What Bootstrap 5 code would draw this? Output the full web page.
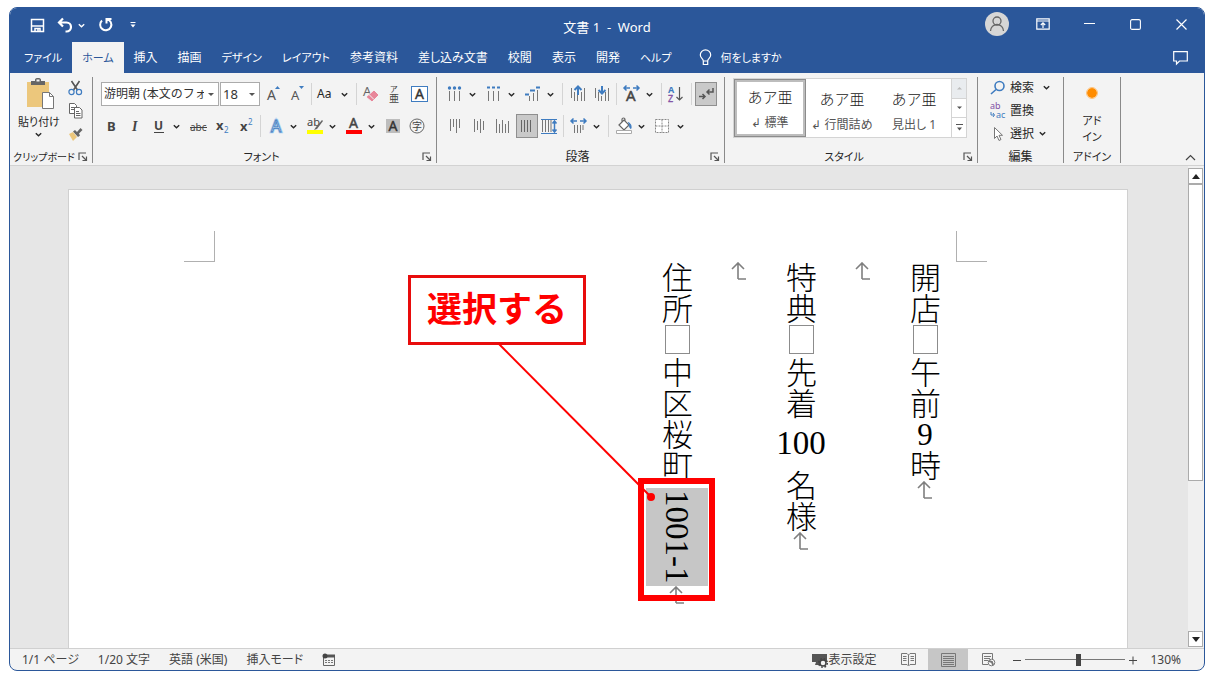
<!DOCTYPE html>
<html lang="ja">
<head>
<meta charset="utf-8">
<meta name="viewport" content="width=device-width, initial-scale=1">
<title>文書 1 - Word</title>
<link rel="stylesheet" href="https://cdn.jsdelivr.net/npm/bootstrap@5.3.0/dist/css/bootstrap.min.css">
<style>
:root{--blue:#2b579a;--ui:"Noto Sans","Noto Sans CJK JP",sans-serif;--mincho:"Liberation Serif","Noto Sans CJK JP",serif}
body{height:100vh;background:#fff;font:12px/16px var(--ui);font-feature-settings:"palt";color:#333;padding:7px 9px 6px;overflow:hidden}
button{background:none;border:0;padding:0;color:inherit;font:inherit;line-height:inherit}
svg{display:block;flex:none;overflow:visible}
a{color:inherit;text-decoration:none}
.kana{font-size:11px}
.kana-sm{font-size:10px}
.app-window{border:1px solid var(--blue);border-radius:8px;overflow:hidden;background:#f3f3f3}
.title-bar{display:grid;grid-template-columns:1fr auto 1fr;height:34px;background:var(--blue);color:#fff}
.title-bar h1{font-size:13px;line-height:16px;white-space:pre;margin:0}
.caption-tool{width:46px;height:32px;display:grid;place-items:center}
.tab-row{height:31px;background:var(--blue);color:#fff}
.tab-row a{display:block;text-align:center;line-height:31px;padding:0 10px;white-space:nowrap}
.tab-row a.active{background:#f3f3f3;color:var(--blue)}
.ribbon{height:93px;border-bottom:1px solid #d2d2d2;color:#262626;font-size:12px}
.group-box{margin:4px 0 2px;border-right:1px solid #8a8a8a;display:flex;flex-direction:column;flex:none}
.group-name{display:flex;align-items:center;margin-top:auto;height:12px;line-height:12px;white-space:nowrap}
.group-name span{flex:1;text-align:center}
.g-clip{width:83px}.g-font{width:344px}.g-para{width:288px}.g-style{width:253px}.g-edit{width:86px}.g-add{width:57px}
.tool-row{display:flex;align-items:center;height:30px;margin-top:2px}
.tool{width:24px;height:22px;display:flex;align-items:center;flex:none}
.split{display:flex;width:39px;flex:none;align-items:center}
.split .tool{width:22px}
.drop{width:10px;height:22px;display:grid;place-items:center}
.rule{width:1px;height:22px;background:#d4d4d4;margin-right:5px;flex:none}
.tool.pressed{width:22px;height:24px;background:#c9c9c9;border:1px solid #8f8f8f;margin:0 1px 0 -1px}
.pick{appearance:none;border:1px solid #ababab;border-radius:0;background:#fff;height:24px;font:12px/20px var(--ui);padding:0 14px 0 2px;color:#333;width:100%}
.pick-wrap{position:relative}
.pick-wrap::after{content:"";position:absolute;right:5px;top:11px;border:3px solid transparent;border-top-color:#555;border-bottom:0}
.pick-font{width:118px;margin-right:1px}.pick-size{width:40px;margin-right:3px}
.pick-size .pick{font-size:13px}
.gallery{display:flex;width:234px;height:60px;border:1px solid #d4d4d4;background:#fff;margin:1px 0 0 8px}
.style-tile{width:72px;text-align:center;white-space:nowrap;color:#555;height:58px;padding-top:5px}
.style-tile b{display:block;font:300 15px/22px var(--mincho);color:#222;margin-bottom:6px;font-feature-settings:normal}
.style-tile.chosen{border:3px solid #bdbdbd;outline:1px solid #8c8c8c;outline-offset:-1px;padding-top:2px}
.gal-step{width:15px;flex:1;display:grid;place-items:center;border-left:1px solid #d4d4d4;border-bottom:1px solid #d4d4d4}
.edit-line{height:23px;display:flex;align-items:center;white-space:nowrap}
.edit-list{margin-top:-1px}
.addin-dot{margin-bottom:13px}
.work{background:#e6e6e6;min-height:0}
.paper{margin:23px 60px 0 58px;background:#fff;border:1px solid #d0d0d0;border-bottom:0;position:relative;min-width:0}
.marks{padding:41px 140px 0 115px}
.corner{width:31px;height:31px;border:1px solid #b0b0b0;border-top:0}
.corner.start{border-left:0}.corner.end{border-right:0}
.tategaki{writing-mode:vertical-rl;margin-right:171px;margin-left:auto;font:300 31px/62px "Noto Sans CJK JP",sans-serif;font-feature-settings:normal;color:#000;white-space:nowrap;height:360px}
.tategaki p{margin:0}
.space-box{display:inline-block;width:25px;height:29px;border:1px solid #8c8c8c;margin:1px 0 3px}
.tcy{display:inline-block;writing-mode:horizontal-tb;line-height:31px;height:31px;font-family:var(--mincho)}
.tcy.wide{font-size:33px;margin:9px 0 11px}
.pmark{display:inline-block;width:16px;height:18px}
.picked{display:inline-block;background:#c6c6c6;font-family:var(--mincho);font-size:33px;line-height:62px;padding:2px 0;margin-top:7px;height:98px;position:relative}
.frame-red{position:absolute;left:-8px;top:-10px;width:77px;height:123px;border:6px solid #f00}
.callout{position:absolute;right:541px;top:85px;width:178px;height:70px;border:3px solid #e80c0c;background:#fff;color:#f00;font:700 35px/58px "Noto Sans CJK JP",sans-serif;text-align:center;font-feature-settings:normal}
.leader{position:absolute;right:470px;top:154px}
.vscroll{width:16px;padding:2px 1px 1px 0;background:#f0f0f0}
.vscroll button{height:16px;background:#fff;border:1px solid #ababab;display:grid;place-items:center;flex:none}
.thumb{flex:0 0 62%;border:1px solid #ababab;background:#fff}
.status{height:22px;border-top:1px solid #d0d0d0;color:#444;font-size:12px;line-height:21px;white-space:nowrap}
.status-info{gap:19px}
.status-view{padding-right:23px}
.view-btn{width:40px;height:21px;display:grid;place-items:center}
.view-btn.on{background:#c6c6c6}
.zoom-range{appearance:none;width:100px;height:12px;background:linear-gradient(#777,#777) center/100% 1px no-repeat;margin:0 3px}
.zoom-range::-webkit-slider-thumb{appearance:none;width:5px;height:12px;background:#444}
</style>
<script src="https://cdn.jsdelivr.net/npm/bootstrap@5.3.0/dist/js/bootstrap.bundle.min.js"></script>
</head>
<body class="d-flex">
<svg width="0" height="0" class="position-absolute" aria-hidden="true">
  <symbol id="chev" viewBox="0 0 10 10"><path d="M2 3.500l3 3 3-3" fill="none" stroke="currentColor" stroke-width="1.500"/></symbol>
  <symbol id="launch" viewBox="0 0 10 10"><path d="M1 8V1h7M4 4l4 4M8.500 4.500v4h-4" fill="none" stroke="#555" stroke-width="1.200"/></symbol>
  <symbol id="ret" viewBox="0 0 16 18"><path d="M7 17V1.500M1 7l6-6 6 6M7 17h8" fill="none" stroke="#7f7f7f" stroke-width="1.600"/></symbol>
  <symbol id="bars" viewBox="0 0 20 20"><path d="M4.500 7v10M9.500 7v10M14.500 7v10" stroke="#777" fill="none"/></symbol>
</svg>

<div class="app-window d-flex flex-column flex-fill">
  <header>
    <div class="title-bar">
      <div class="d-flex align-items-center">
        <button class="ms-3 me-1 ps-1" aria-label="上書き保存"><svg width="15" height="15" viewBox="0 0 15 15" fill="none" stroke="#fff" stroke-width="1.500"><path d="M1.500 1.500h12v12h-12zM1.500 8h12M5 13.500V10.500h5v3M8 11v2"/></svg></button>
        <button class="ms-2" aria-label="元に戻す"><svg width="16" height="16" viewBox="0 0 16 16" fill="none" stroke="#fff" stroke-width="2.200"><path d="M6 1.500L2 5.500l4 4M2 5.500h7.500a4.500 4.500 0 0 1 0 9H8.500"/></svg></button>
        <button class="ms-1" aria-label="元に戻す一覧"><svg width="9" height="9"><use href="#chev"/></svg></button>
        <button class="ms-2 ps-1" aria-label="やり直し"><svg width="15" height="16" viewBox="0 0 15 16" fill="none" stroke="#fff" stroke-width="2"><path d="M8.500 6.500V2h5M9 2.200A5.600 5.600 0 1 1 4 3.500"/></svg></button>
        <button class="ms-3" aria-label="クイックアクセスの設定"><svg width="8" height="8" viewBox="0 0 8 8"><path d="M1.500 1.500h5" stroke="#fff"/><path d="M1.500 3.500h5L4 6.500z" fill="#fff"/></svg></button>
      </div>
      <h1 class="align-self-center fw-normal pt-1">文書 1  -  Word</h1>
      <div class="d-flex justify-content-end">
        <button class="caption-tool" aria-label="アカウント"><svg width="24" height="24" viewBox="0 0 24 24"><circle cx="12" cy="12" r="12" fill="#d6d6d6"/><circle cx="12" cy="9" r="4" fill="none" stroke="#666" stroke-width="1.300"/><path d="M5.500 19a6.500 6.500 0 0 1 13 0" fill="none" stroke="#666" stroke-width="1.300"/></svg></button>
        <button class="caption-tool" aria-label="リボンの表示オプション"><svg width="14" height="12" viewBox="0 0 14 12" fill="none" stroke="#fff" stroke-width="1.200"><path d="M.8.800h12.400v10.400H.800zM1 3h12M7 10V5M4.800 7L7 4.800 9.200 7"/></svg></button>
        <button class="caption-tool" aria-label="最小化"><svg width="11" height="10"><path d="M0 4.500h11" stroke="#fff"/></svg></button>
        <button class="caption-tool" aria-label="最大化"><svg width="11" height="11"><rect x=".6" y=".6" width="9.800" height="9.800" rx="1.500" fill="none" stroke="#fff" stroke-width="1.100"/></svg></button>
        <button class="caption-tool" aria-label="閉じる"><svg width="11" height="11"><path d="M.5.500l10 10M10.500.500l-10 10" stroke="#fff" stroke-width="1.200"/></svg></button>
      </div>
    </div>
    <nav class="tab-row d-flex ps-1">
      <a href="#" class="kana">ファイル</a><a href="#" class="active kana">ホーム</a><a href="#">挿入</a><a href="#">描画</a><a href="#" class="kana">デザイン</a><a href="#" class="kana">レイアウト</a><a href="#">参考資料</a><a href="#">差し込み文書</a><a href="#">校閲</a><a href="#">表示</a><a href="#">開発</a><a href="#" class="kana">ヘルプ</a>
      <a href="#" class="d-flex align-items-center gap-2 ms-2"><svg width="13" height="17" viewBox="0 0 13 17" fill="none" stroke="#fff" stroke-width="1.200"><path d="M4.300 12c0-2.500-3-3-3-6a5.200 5.200 0 0 1 10.400 0c0 3-3 3.500-3 6zM4.300 12v3.500h4.400V12"/></svg><span class="kana">何をしますか</span></a>
      <button class="ms-auto me-3" aria-label="コメント"><svg width="15" height="14" viewBox="0 0 15 14" fill="none" stroke="#fff" stroke-width="1.200"><path d="M.7.700h13.600v9.300H6.500l-3 3v-3H.7z"/></svg></button>
    </nav>
  </header>

  <section class="ribbon d-flex" aria-label="リボン">
    <div class="group-box g-clip">
      <div class="d-flex">
        <button class="d-flex flex-column align-items-center ms-2 me-1" aria-label="貼り付け">
          <svg width="30" height="33" viewBox="0 0 30 33"><path d="M3 5h22v25H3z" fill="#ecc77c"/><path d="M7 4h4V2.500A2 2 0 0 1 13 1h2a2 2 0 0 1 2 1.500V4h4v4H7z" fill="#666"/><rect x="12.500" y="2.500" width="3" height="2" fill="#f3f3f3"/><path d="M18.500 15.500h7l4 4v12h-11z" fill="#fff" stroke="#777"/><path d="M25.500 15.500v4h4" fill="none" stroke="#777"/></svg>
          <span class="mt-1 text-nowrap kana">貼り付け</span>
          <svg width="9" height="9"><use href="#chev"/></svg>
        </button>
        <div class="d-flex flex-column edit-list ps-1">
          <button class="edit-line" aria-label="切り取り"><svg width="15" height="16" viewBox="0 0 15 16" fill="none"><path d="M3.500 1l6 9M11.500 1l-6 9" stroke="#555" stroke-width="1.600"/><circle cx="3.500" cy="12" r="2.600" stroke="#3f7cc0" stroke-width="1.200"/><circle cx="11" cy="12" r="2.600" stroke="#3f7cc0" stroke-width="1.200"/></svg></button>
          <button class="edit-line" aria-label="コピー"><svg width="15" height="16" viewBox="0 0 15 16" fill="#fff" stroke="#666"><path d="M1.500.500h5l2 2v8h-7zM3 4.500h4M3 6.500h4"/><path d="M6.500 4.500h5l2.500 2.500v8H6.500zM8 8.500h3M8 10.500h4.500M8 12.500h4.500"/></svg></button>
          <button class="edit-line" aria-label="書式のコピー"><svg width="15" height="14" viewBox="0 0 15 14"><path d="M1 7l4-2 4 5-4 4z" fill="#ecc77c"/><path d="M5 4.500l2-1.500 2 2 3.500-4 2 2-3.500 3.500 1 2-2 1.500z" fill="#666"/></svg></button>
        </div>
      </div>
      <div class="group-name pe-1"><span class="kana-sm">クリップボード</span><button aria-label="クリップボードの詳細"><svg width="10" height="10"><use href="#launch"/></svg></button></div>
    </div>

    <div class="group-box g-font ps-2">
      <div class="tool-row">
        <div class="pick-wrap pick-font"><select class="pick" aria-label="フォント名"><option>游明朝 (本文のフォント)</option></select></div>
        <div class="pick-wrap pick-size"><select class="pick" aria-label="フォントサイズ"><option>18</option></select></div>
        <button class="tool" aria-label="フォントの拡大"><svg width="20" height="20" viewBox="0 0 20 20"><text x="4" y="16" font-size="14" fill="#555">A</text><path d="M12 5l2.500-3L17 5z" fill="#3f7cc0"/></svg></button>
        <button class="tool" aria-label="フォントの縮小"><svg width="20" height="20" viewBox="0 0 20 20"><text x="4" y="16" font-size="13" fill="#555">A</text><path d="M12 2l2.500 3L17 2z" fill="#3f7cc0"/></svg></button>
        <i class="rule"></i>
        <div class="split"><button class="tool">Aa</button><button class="drop" aria-label="文字種の変換一覧"><svg width="9" height="9"><use href="#chev"/></svg></button></div>
        <i class="rule"></i>
        <button class="tool" aria-label="書式のクリア"><svg width="20" height="20" viewBox="0 0 20 20"><text x="1" y="12" font-size="13" fill="#666">A</text><path d="M4 13l8-7 5 5-7 7z" fill="#e8869a" stroke="#f3f3f3"/><path d="M7 10.500l5 5" stroke="#f3f3f3"/></svg></button>
        <button class="tool" aria-label="ルビ"><svg width="20" height="20" viewBox="0 0 20 20"><text x="4" y="8" font-size="8" fill="#444">ア</text><text x="3" y="18" font-size="10" fill="#444">亜</text></svg></button>
        <button class="tool" aria-label="囲み線"><svg width="20" height="20" viewBox="0 0 20 20"><rect x="1.500" y="2.500" width="16" height="15" fill="#fff" stroke="#3f7cc0"/><text x="5" y="15" font-size="14" fill="#333" stroke="#333" stroke-width=".4">A</text></svg></button>
      </div>
      <div class="tool-row">
        <button class="tool fw-bold" aria-label="太字"><svg width="20" height="20"><text x="6" y="15" font-size="13" fill="#444">B</text></svg></button>
        <button class="tool" aria-label="斜体"><svg width="20" height="20"><text x="7" y="15" font-size="14" font-family="Liberation Serif" font-style="italic" font-weight="700" fill="#444">I</text></svg></button>
        <div class="split"><button class="tool" aria-label="下線"><svg width="20" height="20"><text x="5" y="14" font-size="12" font-weight="700" fill="#444">U</text><path d="M5 16.500h10" stroke="#444"/></svg></button><button class="drop" aria-label="下線一覧"><svg width="9" height="9"><use href="#chev"/></svg></button></div>
        <button class="tool" aria-label="取り消し線"><svg width="20" height="20"><text x="2" y="15" font-size="10" fill="#444">abc</text><path d="M2 11.500h17" stroke="#444"/></svg></button>
        <button class="tool" aria-label="下付き"><svg width="20" height="20"><text x="4" y="14" font-size="13" font-weight="700" fill="#444">x</text><text x="12" y="17" font-size="8" fill="#3f7cc0">2</text></svg></button>
        <button class="tool" aria-label="上付き"><svg width="20" height="20"><text x="4" y="15" font-size="13" font-weight="700" fill="#444">x</text><text x="12" y="9" font-size="8" fill="#3f7cc0">2</text></svg></button>
        <i class="rule"></i>
        <div class="split"><button class="tool" aria-label="文字の効果"><svg width="20" height="20"><text x="5" y="16" font-size="16" fill="#fff" stroke="#a9cdf0" stroke-width="2.500">A</text><text x="5" y="16" font-size="16" fill="#fff" stroke="#3f7cc0" stroke-width=".8">A</text></svg></button><button class="drop" aria-label="文字の効果一覧"><svg width="9" height="9"><use href="#chev"/></svg></button></div>
        <div class="split"><button class="tool" aria-label="蛍光ペン"><svg width="20" height="20"><text x="2" y="10" font-size="11" fill="#444">ab</text><path d="M17 4l-6 7-2 3 3-1 6-8z" fill="#666"/><path d="M2 14h16v4H2z" fill="#ff0"/></svg></button><button class="drop" aria-label="蛍光ペン一覧"><svg width="9" height="9"><use href="#chev"/></svg></button></div>
        <div class="split"><button class="tool" aria-label="フォントの色"><svg width="20" height="20"><text x="5" y="12" font-size="14" fill="#444" stroke="#444" stroke-width=".5">A</text><path d="M2 14h16v4H2z" fill="#f00"/></svg></button><button class="drop" aria-label="フォントの色一覧"><svg width="9" height="9"><use href="#chev"/></svg></button></div>
        <button class="tool" aria-label="文字の網かけ"><svg width="20" height="20"><path d="M3 3h14v14H3z" fill="#bdbdbd"/><text x="5.500" y="15" font-size="14" fill="#333" stroke="#333" stroke-width=".4">A</text></svg></button>
        <button class="tool" aria-label="囲い文字"><svg width="20" height="20"><circle cx="10" cy="10" r="7" fill="none" stroke="#666"/><text x="5" y="14" font-size="10" fill="#444">字</text></svg></button>
      </div>
      <div class="group-name pe-1"><span class="kana">フォント</span><button aria-label="フォントの詳細"><svg width="10" height="10"><use href="#launch"/></svg></button></div>
    </div>

    <div class="group-box g-para ps-2">
      <div class="tool-row">
        <div class="split"><button class="tool" aria-label="箇条書き"><svg width="20" height="20"><use href="#bars"/><g fill="#3f7cc0"><circle cx="4.500" cy="4" r="1.700"/><circle cx="9.500" cy="4" r="1.700"/><circle cx="14.500" cy="4" r="1.700"/></g></svg></button><button class="drop" aria-label="箇条書き一覧"><svg width="9" height="9"><use href="#chev"/></svg></button></div>
        <div class="split"><button class="tool" aria-label="段落番号"><svg width="20" height="20"><use href="#bars"/><path d="M3 3.500h4M8 3.500h4M13 3.500h4" stroke="#3f7cc0" stroke-width="2" stroke-dasharray="3 1"/></svg></button><button class="drop" aria-label="段落番号一覧"><svg width="9" height="9"><use href="#chev"/></svg></button></div>
        <div class="split"><button class="tool" aria-label="アウトライン"><svg width="20" height="20"><path d="M14.500 6v11M10.500 9v8M6.500 12v5" stroke="#777"/><path d="M13 3.500h4M7 6.500h5M2 10.500h4" stroke="#3f7cc0" stroke-width="2"/></svg></button><button class="drop" aria-label="アウトライン一覧"><svg width="9" height="9"><use href="#chev"/></svg></button></div>
        <i class="rule"></i>
        <button class="tool" aria-label="インデントを減らす"><svg width="20" height="20"><path d="M3.500 4v10M6.500 8v9M9.500 11v6M13.500 8v9M16.500 4v13" stroke="#777"/><path d="M10 11V3M6.500 6L10 2.500 13.500 6" fill="none" stroke="#3f7cc0" stroke-width="2"/></svg></button>
        <button class="tool" aria-label="インデントを増やす"><svg width="20" height="20"><path d="M3.500 4v10M6.500 8v9M9.500 12v5M13.500 8v9M16.500 4v13" stroke="#777"/><path d="M10 2v7M6.500 6L10 9.500 13.500 6" fill="none" stroke="#3f7cc0" stroke-width="2"/></svg></button>
        <i class="rule"></i>
        <div class="split"><button class="tool" aria-label="拡張書式"><svg width="20" height="20"><text x="4" y="17" font-size="15" fill="#444" stroke="#444" stroke-width=".5">A</text><path d="M8 4H2M4.500 1.500L2 4l2.500 2.500M11 4h6M14.500 1.500L17 4l-2.500 2.500" fill="none" stroke="#3f7cc0" stroke-width="1.500"/></svg></button><button class="drop" aria-label="拡張書式一覧"><svg width="9" height="9"><use href="#chev"/></svg></button></div>
        <i class="rule"></i>
        <button class="tool" aria-label="並べ替え"><svg width="20" height="20"><text x="1" y="9" font-size="9" font-weight="700" fill="#3f7cc0">A</text><text x="1" y="18" font-size="9" fill="#8251a5" stroke="#8251a5" stroke-width=".3">Z</text><path d="M12.500 3v13M9.500 13l3 3 3-3" fill="none" stroke="#555" stroke-width="1.200"/></svg></button>
        <i class="rule me-1"></i>
        <button class="tool pressed" aria-label="編集記号の表示"><svg width="20" height="20"><path d="M17 4v4h-6M13.500 5.500L11 8l2.500 2.500M3 12.500h6M6.500 10L9 12.500 6.500 15" fill="none" stroke="#555" stroke-width="1.500"/></svg></button>
      </div>
      <div class="tool-row">
        <button class="tool" aria-label="上揃え"><svg width="20" height="20"><path d="M5.500 3v12M8.500 3v8M11.500 3v14M14.500 3v9" stroke="#777"/></svg></button>
        <button class="tool" aria-label="中央揃え"><svg width="20" height="20"><path d="M5.500 3v13M8.500 5v9M11.500 3v14M14.500 5v9" stroke="#777"/></svg></button>
        <button class="tool" aria-label="下揃え"><svg width="20" height="20"><path d="M3.500 3v14M6.500 8v9M9.500 4v13M12.500 8v9M15.500 5v12" stroke="#777"/></svg></button>
        <button class="tool pressed" aria-label="両端揃え"><svg width="20" height="20"><path d="M4.500 4v12M7.500 4v12M10.500 4v12M13.500 4v12" stroke="#666"/></svg></button>
        <button class="tool" aria-label="均等割り付け"><svg width="20" height="20"><path d="M3.500 4v12M6.500 4v12M9.500 4v12M12 4v12" stroke="#777"/><path d="M2 3.500h16M2 17.500h16" stroke="#3f7cc0"/><path d="M15.500 5v11M13.500 7.500l2-2.500 2 2.500M13.500 13.500l2 2.500 2-2.500" fill="none" stroke="#3f7cc0" stroke-width="1.500"/></svg></button>
        <i class="rule"></i>
        <div class="split"><button class="tool" aria-label="行と段落の間隔"><svg width="20" height="20"><path d="M5.500 9v8M8.500 9v8M11.500 9v8M14 9v5" stroke="#777"/><path d="M8 5H2M4.500 2.500L2 5l2.500 2.500M11 5h6M14.500 2.500L17 5l-2.500 2.500" fill="none" stroke="#3f7cc0" stroke-width="1.500"/></svg></button><button class="drop" aria-label="行間一覧"><svg width="9" height="9"><use href="#chev"/></svg></button></div>
        <i class="rule"></i>
        <div class="split"><button class="tool" aria-label="塗りつぶし"><svg width="20" height="20"><path d="M5 9l5-5 5 5-5 5zM8 6V3.500a1.500 1.500 0 0 1 3 0V6" fill="#fff" stroke="#666" stroke-width="1.200"/><path d="M14.500 6.500c2 1 3 3 2.500 6-2-1-2-3-1.500-4z" fill="#3f7cc0" stroke="#3f7cc0"/><path d="M2.500 14.500h15v3h-15z" fill="#fff" stroke="#aaa"/></svg></button><button class="drop" aria-label="塗りつぶし一覧"><svg width="9" height="9"><use href="#chev"/></svg></button></div>
        <div class="split"><button class="tool" aria-label="罫線"><svg width="20" height="20"><path d="M2.500 3.500h13v13h-13zM9 3.500v13M2.500 10h13" fill="#fff" stroke="#888" stroke-dasharray="2 1"/></svg></button><button class="drop" aria-label="罫線一覧"><svg width="9" height="9"><use href="#chev"/></svg></button></div>
      </div>
      <div class="group-name pe-1"><span>段落</span><button aria-label="段落の詳細"><svg width="10" height="10"><use href="#launch"/></svg></button></div>
    </div>

    <div class="group-box g-style">
      <div class="gallery">
        <button class="style-tile chosen"><b>あア亜</b>↲ 標準</button>
        <button class="style-tile"><b>あア亜</b>↲ 行間詰め</button>
        <button class="style-tile"><b>あア亜</b>見出し 1</button>
        <div class="d-flex flex-column ms-auto">
          <button class="gal-step bg-body-secondary" aria-label="前のスタイル"><svg width="7" height="4"><path d="M1 3.500h5L3.500 1z" fill="#bbb"/></svg></button>
          <button class="gal-step" aria-label="次のスタイル"><svg width="7" height="4"><path d="M1 .5h5L3.500 3z" fill="#555"/></svg></button>
          <button class="gal-step border-bottom-0" aria-label="スタイル一覧"><svg width="7" height="8"><path d="M0 .5h7" stroke="#555"/><path d="M1 3.500h5L3.500 6.500z" fill="#555"/></svg></button>
        </div>
      </div>
      <div class="group-name pe-1"><span class="kana">スタイル</span><button aria-label="スタイルの詳細"><svg width="10" height="10"><use href="#launch"/></svg></button></div>
    </div>

    <div class="group-box g-edit ps-2">
      <div class="ps-1 edit-list">
        <button class="edit-line gap-1"><svg width="16" height="16" viewBox="0 0 16 16" fill="none" stroke="#3f7cc0" stroke-width="1.600"><circle cx="9.500" cy="6" r="4.500"/><path d="M6 9.500L1 14"/></svg>検索<svg class="ms-1" width="9" height="9"><use href="#chev"/></svg></button>
        <button class="edit-line gap-1"><svg width="16" height="18" viewBox="0 0 16 18"><text x="0" y="7" font-size="9" fill="#8251a5">ab</text><text x="6" y="16" font-size="9" fill="#3f7cc0">ac</text><path d="M1 10v3h3M3 11l1.500 2L3 15" fill="none" stroke="#3f7cc0"/></svg>置換</button>
        <button class="edit-line gap-1"><svg width="16" height="16" viewBox="0 0 16 16"><path d="M4.500 1.500v11l2.500-2.500 2 4.500 2-1-2-4.200h3.500z" fill="#fff" stroke="#777"/></svg>選択<svg width="9" height="9"><use href="#chev"/></svg></button>
      </div>
      <div class="group-name pe-2"><span>編集</span></div>
    </div>

    <div class="group-box g-add">
      <button class="d-flex flex-column align-items-center pt-2"><svg width="14" height="15" class="addin-dot"><circle cx="7" cy="8" r="5" fill="#ff8c00"/><circle cx="7" cy="8" r="5.500" fill="none" stroke="#ffc27a"/></svg><span class="kana">アド<br>イン</span></button>
      <div class="group-name"><span class="kana">アドイン</span></div>
    </div>
    <button class="ms-auto align-self-end pe-2 pb-1" aria-label="リボンを折りたたむ"><svg width="11" height="7"><path d="M1 6l4.500-4.500L10 6" fill="none" stroke="#444" stroke-width="1.200"/></svg></button>
  </section>

  <main class="work d-flex flex-fill">
    <article class="paper flex-fill">
      <div class="marks d-flex justify-content-between"><i class="corner start"></i><i class="corner end"></i></div>
      <div class="tategaki">
        <p>開店<span class="space-box"></span>午前<span class="tcy">9</span>時<span class="pmark"><svg width="16" height="18"><use href="#ret"/></svg></span></p>
        <p><span class="pmark"><svg width="16" height="18"><use href="#ret"/></svg></span></p>
        <p>特典<span class="space-box"></span>先着<span class="tcy wide">100</span>名様<span class="pmark"><svg width="16" height="18"><use href="#ret"/></svg></span></p>
        <p><span class="pmark"><svg width="16" height="18"><use href="#ret"/></svg></span></p>
        <p>住所<span class="space-box"></span>中区桜町<span class="picked">1001-1<i class="frame-red"></i></span><span class="pmark"><svg width="16" height="18"><use href="#ret"/></svg></span></p>
      </div>
      <div class="callout">選択する</div>
      <svg class="leader" width="160" height="160" aria-hidden="true"><path d="M2 0l152 153" stroke="#f00" stroke-width="2"/><circle cx="154" cy="153" r="4" fill="#f00"/></svg>
    </article>
    <div class="vscroll d-flex flex-column">
      <button aria-label="上へスクロール"><svg width="8" height="5"><path d="M0 5h8L4 0z" fill="#222"/></svg></button>
      <div class="thumb"></div>
      <button class="mt-auto" aria-label="下へスクロール"><svg width="8" height="5"><path d="M0 0h8L4 5z" fill="#222"/></svg></button>
    </div>
  </main>

  <footer class="status d-flex align-items-center">
    <div class="status-info d-flex align-items-center ps-2 ms-1"><span>1/1 ページ</span><span>1/20 文字</span><span>英語 (米国)</span><span>挿入モード</span>
      <svg width="13" height="13" viewBox="0 0 13 13"><path d="M1.500 3.500h11v9h-11z" fill="none" stroke="#666"/><path d="M5 1.500h8v3H5z" fill="#555"/><circle cx="3" cy="3" r="2.500" fill="#444"/><path d="M3 7.500h8M3 9.500h8" stroke="#777" stroke-dasharray="2 1"/></svg></div>
    <div class="status-view d-flex align-items-center ms-auto">
      <button class="d-flex align-items-center me-2 pe-1"><svg width="17" height="16" viewBox="0 0 17 16"><path d="M1 2h15v8H1zM5 10h5v3H4z" fill="#555"/><circle cx="12" cy="11" r="3" fill="#f3f3f3" stroke="#444" stroke-width="1.500"/><circle cx="12" cy="11" r="4.300" fill="none" stroke="#444" stroke-width="1.500" stroke-dasharray="1.700 1.700"/></svg>表示設定</button>
      <button class="view-btn" aria-label="閲覧モード"><svg width="15" height="13" viewBox="0 0 15 13" fill="none" stroke="#777"><path d="M7.500 2L6 .500H.500v11H6L7.500 13 9 11.500h5.500V.500H9zM7.500 2v10M2 3.500h3.500M2 5.500h3.500M2 7.500h3.500M9.500 3.500H13M9.500 5.500H13M9.500 7.500H13"/></svg></button>
      <button class="view-btn on" aria-label="印刷レイアウト"><svg width="15" height="14" fill="none" stroke="#777"><path d="M.5.500h14v13H.500zM2 3.500h11M2 5.500h11M2 7.500h11M2 9.500h11M2 11.500h11"/></svg></button>
      <button class="view-btn" aria-label="Web レイアウト"><svg width="15" height="14" viewBox="0 0 15 14" fill="none" stroke="#777"><path d="M7 11.500H1.500V.500h10V6M3 3.500h7M3 5.500h6M3 7.500h4"/><circle cx="10.500" cy="9.500" r="3.300" fill="#fff"/><path d="M8 8l3 1 1 3" stroke-width="2"/></svg></button>
      <button class="ms-1" aria-label="縮小"><svg width="10" height="10"><path d="M1 5.500h8" stroke="#444"/></svg></button>
      <input type="range" class="zoom-range" min="0" max="100" value="53" aria-label="ズーム">
      <button class="me-2" aria-label="拡大"><svg width="10" height="10"><path d="M1 5.500h8M5 1.500v8" stroke="#444"/></svg></button>
      <span class="ps-1">130%</span>
    </div>
  </footer>
</div>
</body>
</html>
